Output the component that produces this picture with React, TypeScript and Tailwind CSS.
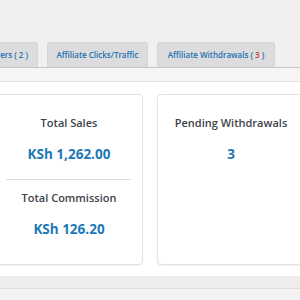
import React from "react";

function Tab({ children, className = "" }: { children: React.ReactNode; className?: string }) {
	return (
		<div
			className={`h-[25px] flex items-center px-[9px] bg-[#dcdcde] border border-b-0 border-[#d5d5d8] rounded-t-[3px] text-[8px] font-semibold text-[#2271b1] whitespace-nowrap ${className}`}
		>
			{children}
		</div>
	);
}

function Stat({ label, value }: { label: string; value: string }) {
	return (
		<div className="flex flex-col items-center">
			<div className="h-[15px] leading-[15px] text-[11px] font-semibold text-[#3c434a]">{label}</div>
			<div className="mt-[14px] h-[20px] leading-[20px] text-[13.5px] font-bold text-[#1d78b6]">{value}</div>
		</div>
	);
}

export default function App() {
	return (
		<div className="w-[300px] h-[300px] overflow-hidden bg-[#f0f0f1] font-['Open_Sans',sans-serif]">
			<div className="pt-[42px] border-b border-[#c3c4c7]">
				<div className="flex gap-[9px] -ml-[82px]">
					<Tab className="w-[120px] justify-end">
						Affiliate Referrers (&nbsp;2&nbsp;)
					</Tab>
					<Tab className="w-[101px] justify-center">Affiliate Clicks/Traffic</Tab>
					<Tab className="w-[118px] justify-center">
						Affiliate Withdrawals (&nbsp;<span className="text-[#d63638]">3</span>&nbsp;)
					</Tab>
				</div>
			</div>
			<div className="h-[13px] bg-[#f5f5f6]" />
			<div className="bg-white border-t border-[#e2e2e4] pt-[12px] pb-[11px] shadow-[0_1px_1px_rgba(0,0,0,0.06)]">
				<div className="flex gap-[14px] -ml-[5px] w-[310px]">
					<div className="w-[148px] h-[171px] bg-white border border-[#e3e3e5] rounded-[4px] shadow-[0_1px_2px_rgba(0,0,0,0.06)] pt-[20px]">
						<Stat label="Total Sales" value="KSh 1,262.00" />
						<div className="mt-[15px] ml-[10px] mr-[11px] border-t border-[#dcdcde]" />
						<div className="pt-[10px]">
							<Stat label="Total Commission" value="KSh 126.20" />
						</div>
					</div>
					<div className="w-[148px] h-[171px] bg-white border border-[#e3e3e5] rounded-[4px] shadow-[0_1px_2px_rgba(0,0,0,0.06)] pt-[20px]">
						<Stat label="Pending Withdrawals" value="3" />
					</div>
				</div>
			</div>
			<div className="h-[13px] bg-[#ededee] border-b border-[#e0e0e2]" />
			<div className="h-[20px] bg-[#f2f2f3]" />
		</div>
	);
}
